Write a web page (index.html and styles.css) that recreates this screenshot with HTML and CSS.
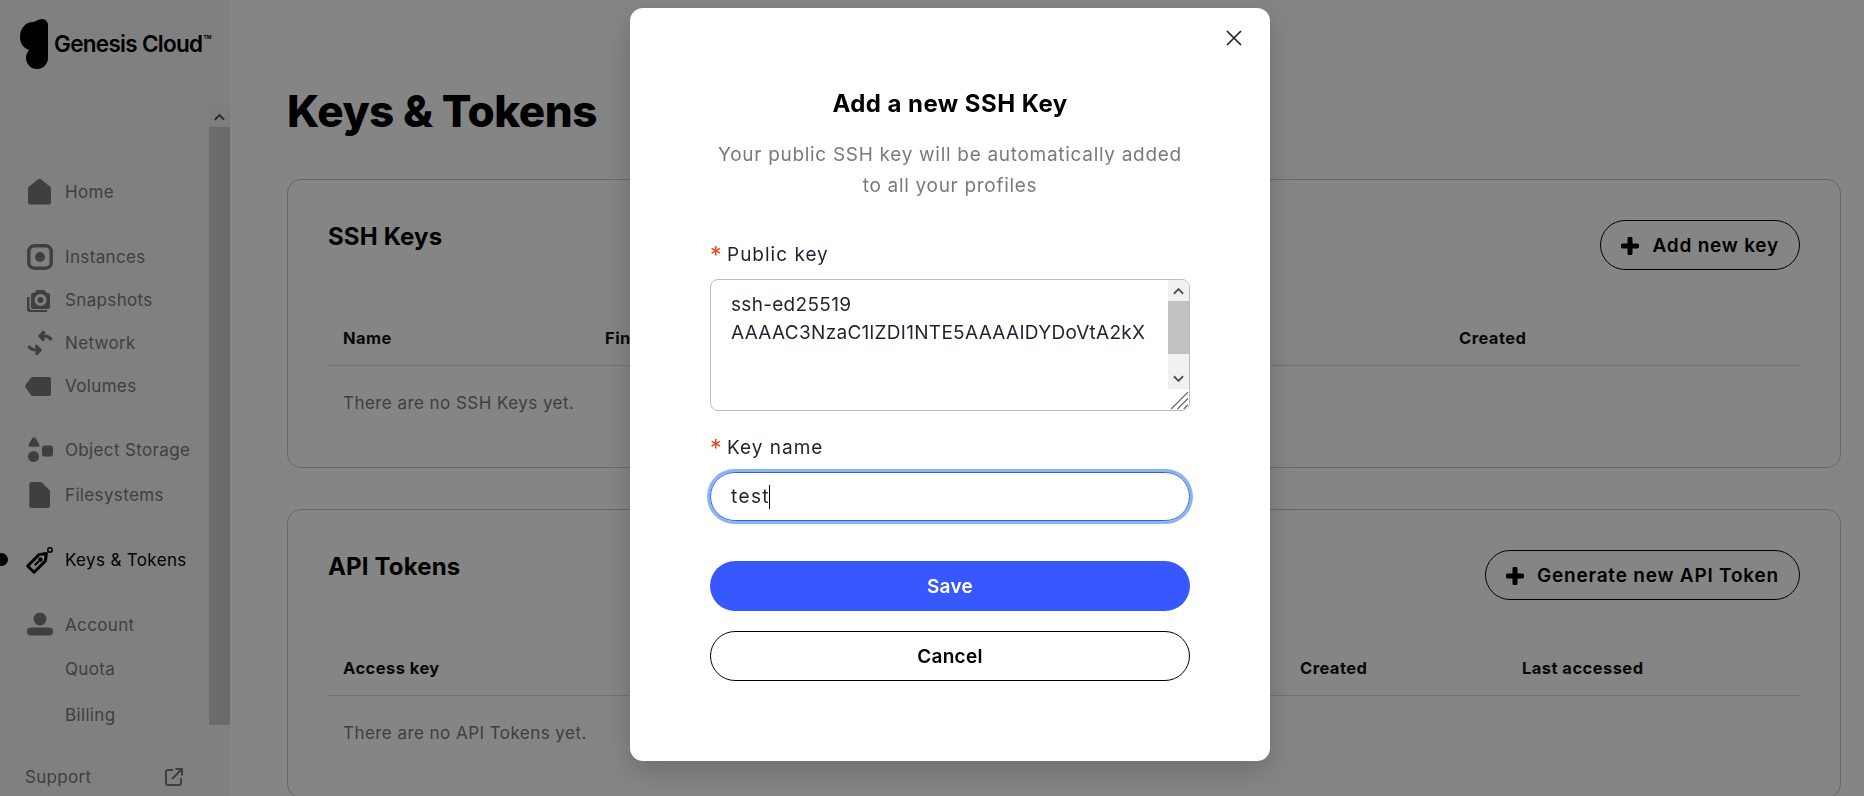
FILE: index.html
```html
<!DOCTYPE html>
<html lang="en">
<head>
<meta charset="utf-8">
<title>Keys &amp; Tokens</title>
<link rel="stylesheet" href="styles.css">
</head>
<body>
<div class="app">
  <aside class="sidebar">
    <div class="side-main">
      <div class="brand">
        <svg class="brand-mark" viewBox="0 0 28 50"><path d="M22 0c3.300 0 6 2.700 6 6V39a11 11 0 0 1-22 0c0-3.500 1.500-6 3-8C3 29 0 24 0 18 0 9 6 3 13 3c3 0 5-3 9-3z"/></svg>
        <span class="brand-name">Genesis Cloud</span><span class="brand-tm">TM</span>
      </div>
      <nav class="nav">
        <a class="nav-item"><svg class="ico" viewBox="0 0 26 26"><path d="M13.500 0l9.500 7.500c.6.500 1 1.200 1 2V23.500a2 2 0 0 1-2 2H3a2 2 0 0 1-2-2V9.500c0-.8.400-1.500 1-2l9.500-7.500c.6-.4 1.400-.4 2 0z"/></svg>Home</a>
        <a class="nav-item nav-group"><svg class="ico" viewBox="0 0 26 26"><rect x="1.800" y="1.800" width="22.400" height="22.400" rx="5.500" fill="none" stroke-width="3.400"/><circle cx="13" cy="13" r="5"/></svg>Instances</a>
        <a class="nav-item"><svg class="ico" viewBox="0 0 26 26"><path class="fillrule" d="M7 6l3-3h7l3 3h1a2 2 0 0 1 2 2v12a2 2 0 0 1-2 2H6a2 2 0 0 1-2-2V8a2 2 0 0 1 2-2zM13.500 7a6 6 0 1 0 0 12 6 6 0 0 0 0-12zM13.500 10a3 3 0 1 1 0 6 3 3 0 0 1 0-6z"/><path d="M0 10h2.500v11a2 2 0 0 0 2 2H20v2H3a3 3 0 0 1-3-3z"/></svg>Snapshots</a>
        <a class="nav-item"><svg class="ico ico-line" viewBox="0 0 26 26"><path d="M24.500 10C22.500 6.800 19 5.300 13.500 6M17.500 1.500L13 6l4 4.500M1.500 16C3.500 19.200 7 20.700 12.500 20M8.500 15.500L13 20l-4 4.500"/></svg>Network</a>
        <a class="nav-item"><svg class="ico ico-vol" viewBox="2 0 26 20"><path d="M7.500 1H24a2 2 0 0 1 2 2v15a2 2 0 0 1-2 2H7.500a2 2 0 0 1-1.400-.6L.7 11.500a2 2 0 0 1 0-2.800L6.100 1.600A2 2 0 0 1 7.500 1z"/></svg>Volumes</a>
        <a class="nav-item nav-group nav-object"><svg class="ico" viewBox="0 0 26 26"><path d="M5.300 1.200a2 2 0 0 1 3.400 0l3.700 6.200a1.500 1.500 0 0 1-1.300 2.300H3a1.500 1.500 0 0 1-1.300-2.300z"/><circle cx="6.500" cy="19.500" r="5.500"/><rect x="15" y="8.500" width="11" height="11" rx="2.800"/></svg>Object Storage</a>
        <a class="nav-item nav-files"><svg class="ico" viewBox="0 0 26 26"><path d="M4.800 0H13.500a2 2 0 0 1 1.400.6l7.500 7.300c.4.400.6.900.6 1.400V23.500a2.500 2.500 0 0 1-2.500 2.500H4.800a2.500 2.500 0 0 1-2.500-2.500V2.500A2.500 2.500 0 0 1 4.800 0z"/></svg>Filesystems</a>
        <a class="nav-item nav-group nav-active"><span class="active-dot"></span><svg class="ico" viewBox="0 0 26 26"><g transform="rotate(-45 12 14)"><path d="M.5 9.500h16l6 4.500-6 4.500H.5z" fill="none" stroke-width="3" stroke-linejoin="round"/><path d="M6 14h6" fill="none" stroke-width="2"/><circle cx="14" cy="14" r="2.200"/></g><circle cx="23" cy="3" r="2.200" fill="none" stroke-width="1.500"/></svg>Keys &amp; Tokens</a>
        <a class="nav-item nav-group"><svg class="ico" viewBox="0 0 26 26"><circle cx="13" cy="7" r="6.500"/><rect y="15.500" width="26" height="8" rx="4"/></svg>Account</a>
        <a class="nav-item nav-sub">Quota</a>
        <a class="nav-item nav-sub">Billing</a>
      </nav>
      <a class="support">Support
        <svg class="ext" viewBox="0 0 18 18"><path d="M8 2H3a2 2 0 0 0-2 2v11a2 2 0 0 0 2 2h11a2 2 0 0 0 2-2v-5" fill="none" stroke-width="2"/><path d="M7 11l9-9M10.500 1H17v6.500" fill="none" stroke-width="2"/></svg>
      </a>
    </div>
    <div class="side-scroll">
      <div class="side-scroll-btn"><svg viewBox="0 0 12 8"><path d="M1 7l5-5 5 5" fill="none" stroke-width="2"/></svg></div>
      <div class="side-scroll-thumb"></div>
    </div>
  </aside>

  <main class="main">
    <h1 class="page-title">Keys &amp; Tokens</h1>

    <section class="card">
      <header class="card-head">
        <h2 class="card-title">SSH Keys</h2>
        <button class="btn btn-outline btn-add"><svg class="plus" viewBox="0 0 18 18"><path d="M9 2v14M2 9h14" stroke-width="5" stroke-linecap="round"/></svg>Add new key</button>
      </header>
      <div class="table-head head-ssh">
        <span>Name</span><span>Fingerprint</span><span>Created</span>
      </div>
      <p class="empty">There are no SSH Keys yet.</p>
    </section>

    <section class="card">
      <header class="card-head">
        <h2 class="card-title">API Tokens</h2>
        <button class="btn btn-outline btn-add"><svg class="plus" viewBox="0 0 18 18"><path d="M9 2v14M2 9h14" stroke-width="5" stroke-linecap="round"/></svg>Generate new API Token</button>
      </header>
      <div class="table-head head-api">
        <span>Access key</span><span>Description</span><span>Created</span><span>Last accessed</span>
      </div>
      <p class="empty">There are no API Tokens yet.</p>
    </section>
  </main>
</div>

<div class="overlay">
  <div class="modal">
    <button class="close" aria-label="Close"><svg viewBox="0 0 16 16"><path d="M1 1l14 14M15 1L1 15" fill="none" stroke-width="1.700"/></svg></button>
    <h2 class="modal-title">Add a new SSH Key</h2>
    <p class="modal-sub">Your public SSH key will be automatically added<br>to all your profiles</p>

    <label class="field-label label-first"><span class="req">*</span>Public key</label>
    <div class="textarea">
      <div class="textarea-text">ssh-ed25519<br>AAAAC3NzaC1lZDI1NTE5AAAAIDYDoVtA2kX</div>
      <div class="ta-scroll">
        <div class="ta-btn"><svg viewBox="0 0 12 8"><path d="M1 7l5-5 5 5" fill="none" stroke-width="2"/></svg></div>
        <div class="ta-thumb"></div>
        <div class="ta-track"></div>
        <div class="ta-btn"><svg viewBox="0 0 12 8"><path d="M1 1l5 5 5-5" fill="none" stroke-width="2"/></svg></div>
        <div class="ta-resize"><svg viewBox="0 0 20 20"><path d="M3 19L19 3M9 19L19 9M15 19l4-4" fill="none" stroke-width="1.200"/></svg></div>
      </div>
    </div>

    <label class="field-label label-second"><span class="req">*</span>Key name</label>
    <div class="input">test<span class="caret"></span></div>

    <button class="btn btn-primary">Save</button>
    <button class="btn btn-outline btn-cancel">Cancel</button>
  </div>
</div>
</body>
</html>
```
FILE: styles.css
```css
* { box-sizing: border-box; }
html, body { margin: 0; height: 100%; }
body {
  overflow: hidden;
  font-family: "Inter", "Liberation Sans", sans-serif;
  color: #000;
  background: #fff;
}
.app { display: flex; height: 796px; overflow: hidden; }

/* Sidebar */
.sidebar { display: flex; flex: 0 0 230px; width: 230px; min-width: 0; height: 796px; background: #f6f6f6; }
.side-main { flex: 1; display: flex; flex-direction: column; min-width: 0; }
.brand { display: flex; align-items: flex-start; height: 106px; padding: 19px 0 0 20px; }
.brand-mark { width: 28px; height: 50px; fill: #000; flex: none; }
.brand-name { margin: 12px 0 0 6px; font-size: 22.5px; line-height: 26px; font-weight: 600; letter-spacing: -0.7px; white-space: nowrap; }
.brand-tm { font-size: 5px; line-height: 8px; margin: 14px 0 0 1px; font-weight: 700; }
.nav { display: flex; flex-direction: column; padding-top: 64px; flex: 1; }
.nav-item {
  position: relative;
  display: flex;
  align-items: center;
  gap: 12px;
  height: 43px;
  padding-left: 27px;
  font-size: 17px;
  color: #797979;
  letter-spacing: 0.35px;
  white-space: nowrap;
}
.nav-group { margin-top: 22px; }
.nav-object { margin-top: 21px; }
.nav-files { margin-top: 2px; }
.nav-sub { padding-left: 65px; height: 46px; }
.nav-active { color: #000; }
.ico { width: 26px; height: 26px; flex: none; fill: #797979; stroke: #797979; stroke-width: 0; overflow: visible; }
.ico-line { fill: none; stroke-width: 3.200; }
.ico-vol { height: 20px; }
.fillrule { fill-rule: evenodd; }
.nav-active .ico { fill: #000; stroke: #000; }
.active-dot { position: absolute; left: -5px; top: 15px; width: 13px; height: 13px; border-radius: 50%; background: #000; }
.support {
  display: flex;
  align-items: center;
  justify-content: space-between;
  height: 40px;
  margin-bottom: -1px;
  padding: 0 26px 0 25px;
  font-size: 17px;
  color: #797979;
  letter-spacing: 0.3px;
}
.ext { width: 18px; height: 18px; stroke: #797979; }
.side-scroll { flex: 0 0 21px; display: flex; flex-direction: column; padding-top: 106px; }
.side-scroll-btn { height: 21px; display: flex; align-items: center; justify-content: center; background: #f1f1f1; }
.side-scroll-btn svg { width: 11px; height: 8px; stroke: #505050; }
.side-scroll-thumb { height: 598px; background: #cdcdcd; }

/* Main */
.main { flex: 1; min-width: 0; padding: 85px 23px 0 57px; }
.page-title { margin: 0 0 41px; font-size: 44px; line-height: 53px; font-weight: 800; letter-spacing: -0.5px; }
.card { height: 289px; margin-bottom: 41px; padding: 0 40px; border: 1px solid #c8c8c8; border-radius: 14px; }
.card-head { display: flex; align-items: flex-start; justify-content: space-between; padding-top: 40px; height: 125px; }
.card-title { margin: 0; padding-top: 1px; font-size: 24px; line-height: 32px; font-weight: 700; letter-spacing: 0.15px; }
.table-head { display: grid; align-items: center; height: 61px; padding: 6px 0 0 15px; font-size: 16.500px; font-weight: 700; letter-spacing: 0.45px; color: #111; border-bottom: 1px solid #dcdcdc; }
.head-ssh { grid-template-columns: 262px 854px 1fr; }
.head-api { grid-template-columns: 357px 600px 222px 1fr; }
.empty { margin: 0; padding: 24px 0 0 15px; font-size: 17px; line-height: 26px; color: #797979; letter-spacing: 0.45px; }

/* Buttons */
.btn {
  display: flex;
  align-items: center;
  justify-content: center;
  height: 50px;
  width: 100%;
  padding: 1px 0 0;
  border: 0;
  border-radius: 25px;
  font: 600 19px/24px "Inter", "Liberation Sans", sans-serif;
  letter-spacing: 0.3px;
  cursor: pointer;
}
.btn-outline { background: transparent; border: 1px solid #000; color: #000; }
.btn-add { width: auto; gap: 13px; padding: 1px 20px 0 20px; white-space: nowrap; letter-spacing: 0.8px; }
.plus { width: 18px; height: 18px; stroke: #000; flex: none; }
.btn-primary { margin-top: 40px; padding-top: 2px; background: #3858ff; color: #fff; }
.btn-cancel { margin-top: 20px; background: #fff; }

/* Modal */
.overlay {
  position: fixed;
  inset: 0;
  display: flex;
  justify-content: center;
  align-items: flex-start;
  padding: 8px 0 0 36px;
  background: rgba(0, 0, 0, 0.48);
}
.modal {
  position: relative;
  display: flex;
  flex-direction: column;
  flex: none;
  width: 640px;
  height: 753px;
  padding: 80px 80px;
  background: #fff;
  border-radius: 13px;
  box-shadow: 0 10px 30px rgba(0, 0, 0, 0.2);
}
.close { position: absolute; top: 22px; right: 28px; width: 16px; height: 16px; padding: 0; border: 0; background: none; display: flex; }
.close svg { width: 16px; height: 16px; stroke: #1c2430; }
.modal-title { margin: 0; font-size: 24px; line-height: 32px; font-weight: 700; letter-spacing: 0.45px; text-align: center; }
.modal-sub { margin: 19px 0 0; font-size: 19px; line-height: 31px; letter-spacing: 0.7px; color: #7a7a7a; text-align: center; }
.field-label { display: flex; font-size: 19px; line-height: 28px; letter-spacing: 1px; color: #1d2430; }
.label-first { margin-top: 40px; }
.label-second { margin-top: 23px; }
.req { color: #e8431a; width: 17px; font-size: 23px; letter-spacing: 0; }
.textarea {
  display: flex;
  height: 132px;
  margin-top: 10px;
  border: 1px solid #bdbdbd;
  border-radius: 8px;
  overflow: hidden;
}
.textarea-text { flex: 1; padding: 11px 0 0 20px; font-size: 19px; line-height: 28px; letter-spacing: 0.3px; color: #1d2430; white-space: nowrap; }
.ta-scroll { flex: 0 0 21px; display: flex; flex-direction: column; background: #f1f1f1; }
.ta-btn { height: 21px; flex: none; display: flex; align-items: center; justify-content: center; }
.ta-btn svg { width: 11px; height: 8px; stroke: #505050; }
.ta-thumb { height: 53px; flex: none; background: #c1c1c1; }
.ta-track { flex: 1; }
.ta-resize { height: 21px; flex: none; background: #fff; }
.ta-resize svg { display: block; width: 21px; height: 21px; stroke: #6a6a6a; }
.input {
  display: flex;
  align-items: center;
  height: 49px;
  margin-top: 10px;
  padding-left: 20px;
  border: 1px solid #3858ff;
  border-radius: 25px;
  box-shadow: 0 0 0 3px #8ab6ec;
  font-size: 19px;
  letter-spacing: 1.4px;
  color: #1d2430;
}
.caret { width: 1px; height: 24px; margin-left: -1px; background: #000; }
```
